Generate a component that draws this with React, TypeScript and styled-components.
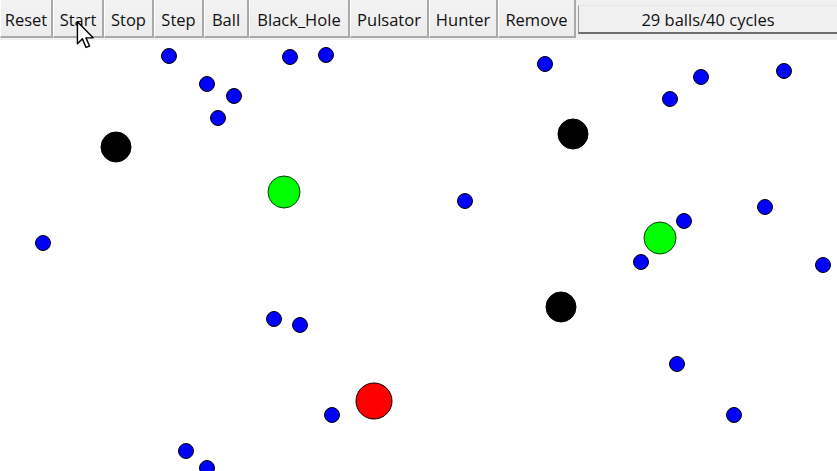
import * as React from "react";
import styled, { createGlobalStyle } from "styled-components";

const GlobalStyle = createGlobalStyle`
  html, body {
    margin: 0;
    padding: 0;
    background: #ffffff;
    overflow: hidden;
  }
`;

const Window = styled.div`
  position: relative;
  width: 837px;
  height: 471px;
  display: flex;
  flex-direction: column;
  background: #ffffff;
  font-family: "Open Sans", "Liberation Sans", sans-serif;
  overflow: hidden;
`;

const Toolbar = styled.div`
  display: flex;
  align-items: flex-start;
  height: 40px;
  background: #f0f0f0;
  flex-shrink: 0;
`;

const ToolButton = styled.button<{ $width: number }>`
  width: ${(p) => p.$width}px;
  height: 38px;
  margin: 0;
  padding: 2px 0 0 0;
  box-sizing: border-box;
  background: linear-gradient(#f3f3f3, #ececec);
  border: none;
  border-left: 1px solid #ffffff;
  border-right: 2px solid #a9a9a9;
  border-bottom: 2px solid #a9a9a9;
  font-family: inherit;
  font-size: 16.5px;
  color: #111111;
  cursor: default;
  flex-shrink: 0;
  white-space: nowrap;
`;

const Status = styled.div`
  flex: 1;
  height: 29px;
  margin: 5px 0 0 2px;
  box-sizing: border-box;
  display: flex;
  align-items: center;
  justify-content: center;
  padding-bottom: 0;
  background: #f0f0f0;
  border-left: 1px solid #9a9a9a;
  border-top: 1px solid #e6e6e6;
  border-bottom: 2px solid #6e6e6e;
  font-size: 16.5px;
  color: #111111;
`;

const Canvas = styled.svg`
  display: block;
  flex: 1;
  width: 837px;
`;

const Cursor = styled.svg`
  position: absolute;
  left: 76px;
  top: 21px;
  width: 20px;
  height: 30px;
`;

type Kind = "ball" | "hole" | "pulsator" | "hunter";

interface Ball {
  x: number;
  y: number;
  kind: Kind;
}

const fills: Record<Kind, string> = {
  ball: "#0000ff",
  hole: "#000000",
  pulsator: "#00ff00",
  hunter: "#ff0000"
};

const radii: Record<Kind, number> = {
  ball: 7.5,
  hole: 15,
  pulsator: 16,
  hunter: 18
};

const balls: Ball[] = [
  { x: 169, y: 56, kind: "ball" },
  { x: 290, y: 57, kind: "ball" },
  { x: 326, y: 55, kind: "ball" },
  { x: 207, y: 84, kind: "ball" },
  { x: 234, y: 96, kind: "ball" },
  { x: 218, y: 118, kind: "ball" },
  { x: 545, y: 64, kind: "ball" },
  { x: 701, y: 77, kind: "ball" },
  { x: 784, y: 71, kind: "ball" },
  { x: 670, y: 99, kind: "ball" },
  { x: 465, y: 201, kind: "ball" },
  { x: 684, y: 221, kind: "ball" },
  { x: 765, y: 207, kind: "ball" },
  { x: 43, y: 243, kind: "ball" },
  { x: 641, y: 262, kind: "ball" },
  { x: 823, y: 265, kind: "ball" },
  { x: 274, y: 319, kind: "ball" },
  { x: 300, y: 325, kind: "ball" },
  { x: 677, y: 364, kind: "ball" },
  { x: 332, y: 415, kind: "ball" },
  { x: 734, y: 415, kind: "ball" },
  { x: 186, y: 451, kind: "ball" },
  { x: 207, y: 468, kind: "ball" },
  { x: 116, y: 147, kind: "hole" },
  { x: 573, y: 134, kind: "hole" },
  { x: 561, y: 307, kind: "hole" },
  { x: 284, y: 192, kind: "pulsator" },
  { x: 660, y: 238, kind: "pulsator" },
  { x: 374, y: 401, kind: "hunter" }
];

const buttons: [string, number][] = [
  ["Reset", 53],
  ["Start", 51],
  ["Stop", 50],
  ["Step", 50],
  ["Ball", 45],
  ["Black_Hole", 101],
  ["Pulsator", 79],
  ["Hunter", 69],
  ["Remove", 78]
];

const TOP = 40;

export default function App() {
  return (
    <Window>
      <GlobalStyle />
      <Toolbar>
        {buttons.map(([label, width]) => (
          <ToolButton key={label} $width={width}>
            {label}
          </ToolButton>
        ))}
        <Status>29 balls/40 cycles</Status>
      </Toolbar>
      <Canvas viewBox={`0 ${TOP} 837 ${471 - TOP}`}>
        {balls.map((b, i) => (
          <circle
            key={i}
            cx={b.x}
            cy={b.y}
            r={radii[b.kind]}
            fill={fills[b.kind]}
            stroke={b.kind === "pulsator" ? "#0a3a0a" : "#000000"}
            strokeWidth={1}
          />
        ))}
      </Canvas>
      <Cursor viewBox="0 0 13 21">
        <path
          d="M0.5 0.5 L0.5 16 L4 12.5 L6.5 18.5 L9 17.5 L6.5 11.8 L11.5 11.8 Z"
          fill="#ffffff"
          stroke="#000000"
          strokeWidth={1}
          strokeLinejoin="round"
        />
      </Cursor>
    </Window>
  );
}
